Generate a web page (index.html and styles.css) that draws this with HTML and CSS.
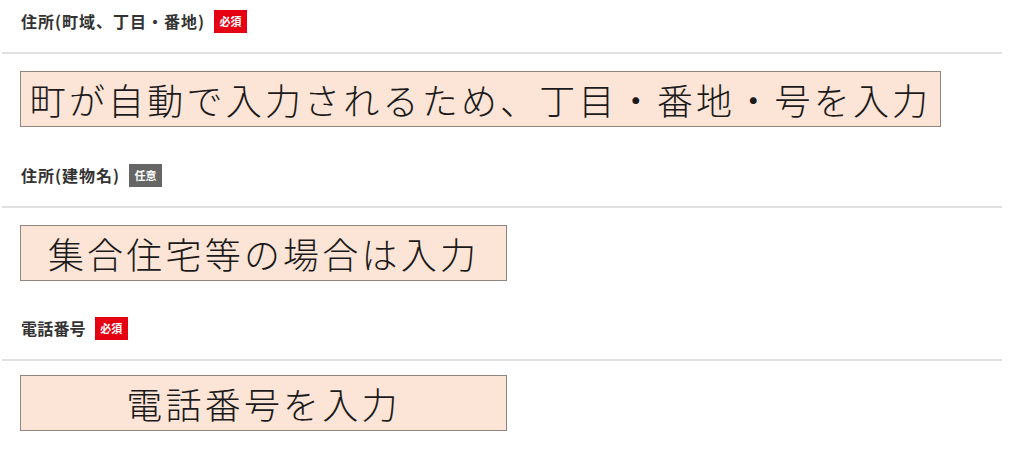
FILE: index.html
```html
<!DOCTYPE html>
<html lang="ja">
<head>
<meta charset="utf-8">
<link rel="stylesheet" href="styles.css">
</head>
<body>
<div class="form">
  <section class="field">
    <div class="label-row">
      <span class="label">住所(町域、丁目・番地)</span>
      <span class="badge req">必須</span>
    </div>
    <hr class="divider">
    <div class="box wide">町が自動で入力されるため、丁目・番地・号を入力</div>
  </section>
  <section class="field">
    <div class="label-row">
      <span class="label">住所(建物名)</span>
      <span class="badge opt">任意</span>
    </div>
    <hr class="divider">
    <div class="box">集合住宅等の場合は入力</div>
  </section>
  <section class="field last">
    <div class="label-row">
      <span class="label tight">電話番号</span>
      <span class="badge req">必須</span>
    </div>
    <hr class="divider">
    <div class="box">電話番号を入力</div>
  </section>
</div>
</body>
</html>
```

FILE: styles.css
```css
html, body {
  margin: 0;
  padding: 0;
  background: #ffffff;
}
body {
  font-family: "Noto Sans CJK JP", "Noto Sans", sans-serif;
  color: #333333;
}
.form {
  width: 1000px;
  margin-left: 2px;
  padding-top: 10px;
  display: flex;
  flex-direction: column;
  gap: 37px;
}
.field {
  display: flex;
  flex-direction: column;
}
.field.last {
  margin-top: -1px;
}
.label-row {
  display: flex;
  align-items: center;
  gap: 9px;
  padding-left: 19px;
  height: 23px;
}
.label {
  font-size: 16px;
  font-weight: 700;
  letter-spacing: 1px;
  color: #333333;
  line-height: 23px;
}
.label.tight {
  letter-spacing: 0.2px;
}
.badge {
  display: flex;
  align-items: center;
  justify-content: center;
  width: 33px;
  height: 23px;
  font-size: 11px;
  font-weight: 700;
  color: #ffffff;
  line-height: 1;
}
.badge.req { background: #e50012; }
.badge.opt { background: #666666; }
.divider {
  margin: 19px 0 0 0;
  border: none;
  height: 2px;
  background: #e0e0e0;
}
.box {
  margin: 17px 0 0 18px;
  width: 485px;
  height: 54px;
  border: 1px solid #8c8580;
  background: #fce4d6;
  display: flex;
  align-items: center;
  justify-content: center;
  font-size: 36px;
  font-weight: 300;
  letter-spacing: 3.2px;
  color: #1a1a1a;
  line-height: 1;
  white-space: nowrap;
}
.field.last .box {
  margin-top: 14px;
}
.box.wide {
  width: 919px;
}
```
